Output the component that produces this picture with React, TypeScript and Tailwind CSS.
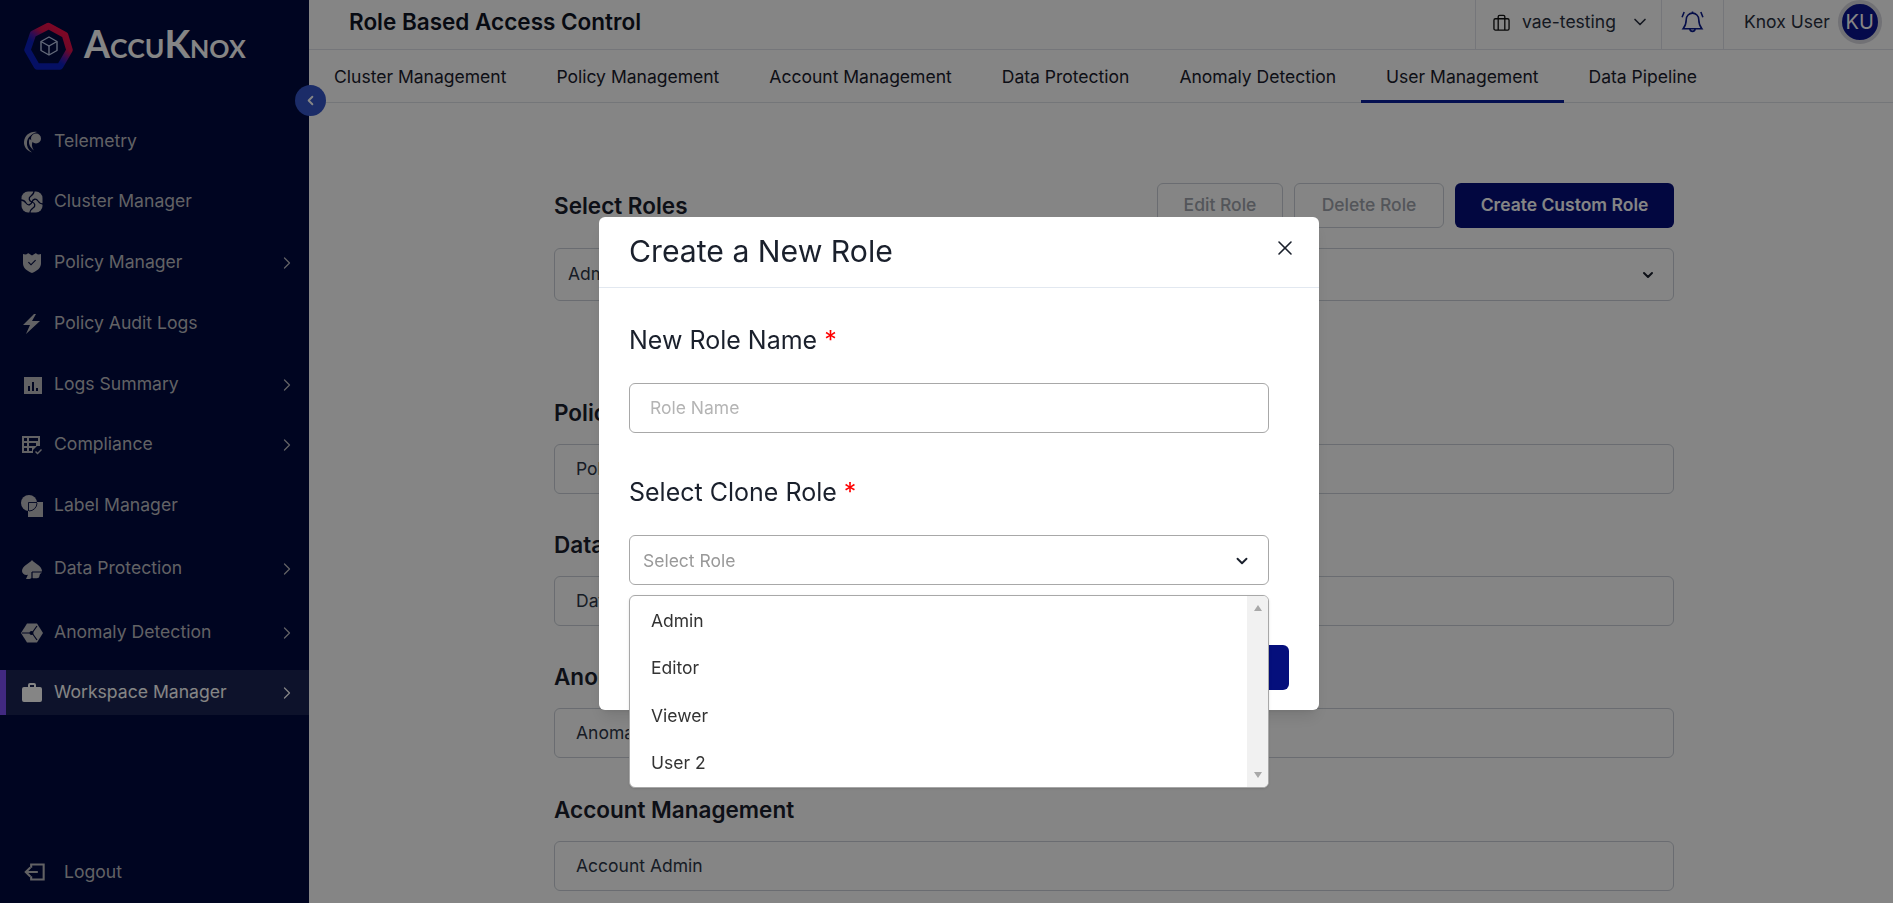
import { ChevronDown, ChevronLeft, ChevronRight, X } from 'lucide-react';
import type { ReactNode } from 'react';

const inter = { fontFamily: 'Inter, "Noto Sans", sans-serif' };
const SIDEBAR_BG = '#000a40';

function Icon({ children }: { children: ReactNode }) {
    return (
        <svg viewBox="0 0 24 24" className="h-[24px] w-[24px] shrink-0" fill="currentColor">
            {children}
        </svg>
    );
}

const NAV = [
    {
        label: 'Telemetry',
        spacing: 'mt-0',
        icon: (
            <Icon>
                <circle cx="16" cy="8.500" r="5" />
                <path d="M17 2C10 1 4.500 5.500 4 12c-.3 4.500 3 9 8 10.500-4-3-5.500-6.500-5-10.500.5-4 4-8 10-10z" />
                <path d="M9.500 9c-1.500 4 0 8 4.500 11.500-2.500-3.500-2.500-7-1-9.500z" />
            </Icon>
        ),
    },
    {
        label: 'Cluster Manager',
        spacing: 'mt-[15px]',
        icon: (
            <Icon>
                <rect x="1.500" y="1.500" width="21" height="21" rx="6.500" />
                <g fill="none" stroke={SIDEBAR_BG} strokeWidth="1.300">
                    <path d="M12 12c-3-1-4-4-1-6 1.500-1 3-2 3-5" />
                    <path d="M12 12c1-3 4-4 6-1 1 1.500 2 3 5 3" />
                    <path d="M12 12c3 1 4 4 1 6-1.500 1-3 2-3 5" />
                    <path d="M12 12c-1 3-4 4-6 1-1-1.500-2-3-5-3" />
                </g>
            </Icon>
        ),
    },
    {
        label: 'Policy Manager',
        spacing: 'mt-[16px]',
        arrow: true,
        icon: (
            <Icon>
                <path
                    fillRule="evenodd"
                    d="M3 3c2 .6 3.500.6 5-.8h.4L12 4.500l3.600-2.300h.4c1.500 1.400 3 1.400 5 .8v9.500c0 4.500-4 7.500-9 9.500-5-2-9-5-9-9.500V3zm5 8.500 3 3 5-5-.8-.8-4.200 4.200-2.200-2.200-.8.800z"
                />
            </Icon>
        ),
    },
    {
        label: 'Policy Audit Logs',
        spacing: 'mt-[16px]',
        icon: (
            <Icon>
                <path d="M14 2 3 13h7l-4 9 14-13h-8l4-7h-2z" />
            </Icon>
        ),
    },
    {
        label: 'Logs Summary',
        spacing: 'mt-[16px]',
        arrow: true,
        icon: (
            <Icon>
                <path
                    fillRule="evenodd"
                    d="M4 4h18v17H4V4zm4 9v5h2v-5H8zm4-4v9h2V9h-2zm4 6v3h2v-3h-2z"
                />
            </Icon>
        ),
    },
    {
        label: 'Compliance',
        spacing: 'mt-[15px]',
        arrow: true,
        icon: (
            <Icon>
                <path
                    fillRule="evenodd"
                    d="M2 3h18v10h-3l-4 4v3H2V3zm2 2v3h3V5H4zm5 0v3h9V5H9zm-5 5v3h3v-3H4zm5 0v3h7v-3H9zm-5 5v3h3v-3H4zm5 0v3h3v-3H9z"
                />
                <path d="m15 19 1-1 1.500 1.500L21 16l1 1-4.500 4.500L15 19z" />
            </Icon>
        ),
    },
    {
        label: 'Label Manager',
        spacing: 'mt-[16px]',
        icon: (
            <Icon>
                <circle cx="9" cy="9" r="8" />
                <rect x="8" y="8" width="15" height="15" />
                <path d="M8.500 17V8.500H17M9 17a8 8 0 0 0 8-8" fill="none" stroke={SIDEBAR_BG} strokeWidth="0.900" />
            </Icon>
        ),
    },
    {
        label: 'Data Protection',
        spacing: 'mt-[18px]',
        textOffset: 'ml-[3px]',
        arrow: true,
        icon: (
            <Icon>
                <path d="M12 3c2 3 10 6 10 11 0 1.500-1 2.500-2 3l-1 3.500c-2 1-5 1-7 .5l-2.500 1H6l2-4.500c-.7.400-1 .5-1.500.5C4 18 2 16 2 14c0-5 8-8 10-11z" />
                <path d="M12 15v7M12 15h10" fill="none" stroke={SIDEBAR_BG} strokeWidth="1.200" />
            </Icon>
        ),
    },
    {
        label: 'Anomaly Detection',
        spacing: 'mt-[19px]',
        arrow: true,
        icon: (
            <Icon>
                <path d="M7 2.500h10l6 9.500-6 9.500H7L1 12z" />
                <path d="M2 12h8M12 12l5-7M12 12l5 7" fill="none" stroke={SIDEBAR_BG} strokeWidth="1.200" />
                <circle cx="11.500" cy="12" r="2" fill={SIDEBAR_BG} />
            </Icon>
        ),
    },
    {
        label: 'Workspace Manager',
        spacing: 'mt-[15px]',
        active: true,
        arrow: true,
        icon: (
            <Icon>
                <path
                    fillRule="evenodd"
                    d="M8 6V4a2 2 0 0 1 2-2h4a2 2 0 0 1 2 2v2h4a2 2 0 0 1 2 2v11a2 2 0 0 1-2 2H4a2 2 0 0 1-2-2V8a2 2 0 0 1 2-2h4zm2 0h4V4h-4v2z"
                />
            </Icon>
        ),
    },
];

const TABS = [
    'Cluster Management',
    'Policy Management',
    'Account Management',
    'Data Protection',
    'Anomaly Detection',
    'User Management',
    'Data Pipeline',
];

function Logo() {
    return (
        <div className="ml-[24px] flex items-center pt-[21px]">
            <svg viewBox="0 0 50 50" className="h-[50px] w-[50px] shrink-0" fill="none">
                <defs>
                    <linearGradient id="ring" x1="0.8" y1="0.1" x2="0.3" y2="0.75">
                        <stop offset="0" stopColor="#f00f48" />
                        <stop offset="0.35" stopColor="#d8104c" />
                        <stop offset="0.6" stopColor="#5a18a0" />
                        <stop offset="0.8" stopColor="#0a1fc0" />
                        <stop offset="1" stopColor="#0a1fc0" />
                    </linearGradient>
                </defs>
                <polygon
                    points="24.500,5 41,14 45.500,29 36,45.500 13,45.500 3.500,29 9,13"
                    stroke="url(#ring)"
                    strokeWidth="6.500"
                    strokeLinejoin="round"
                />
                <g stroke="#c0cceb" strokeWidth="1.400" strokeLinejoin="round">
                    <polygon points="25,16 33,20.500 33,29.500 25,34 17,29.500 17,20.500" />
                    <polyline points="17,20.500 25,25 33,20.500" />
                    <line x1="25" y1="25" x2="25" y2="34" />
                </g>
            </svg>
            <div
                className="mb-[4px] ml-[10px] whitespace-nowrap font-bold leading-none text-white"
                style={{ fontFamily: 'Lato, sans-serif' }}
            >
                <span className="text-[37.5px]">A</span>
                <span className="text-[26.5px]">CCU</span>
                <span className="text-[37.5px]">K</span>
                <span className="text-[25px]">NOX</span>
            </div>
        </div>
    );
}

function Sidebar() {
    return (
        <aside className="relative flex h-full w-[309px] shrink-0 flex-col bg-[#000a40] text-[#bcbcc0]">
            <Logo />
            <div className="absolute right-[-17px] top-[85px] flex h-[31px] w-[31px] items-center justify-center rounded-full bg-[#3455c8] text-white">
                <ChevronLeft className="h-[15px] w-[15px]" strokeWidth={3} />
            </div>
            <nav className="mt-[48px] flex flex-col">
                {NAV.map((item) => (
                    <div
                        key={item.label}
                        className={`flex h-[45px] items-center pl-[20px] pr-[12px] text-[17.6px] ${item.spacing} ${
                            item.active ? 'border-l-[6px] !pl-[14px] border-[#7e50f5] bg-white/10 text-white' : ''
                        }`}
                    >
                        {item.icon}
                        <span className={`ml-[10px] ${item.textOffset ?? ''}`}>{item.label}</span>
                        {item.arrow && <ChevronRight className="ml-auto h-[20px] w-[20px]" strokeWidth={1.5} />}
                    </div>
                ))}
            </nav>
            <div className="mt-auto mb-[18px] flex h-[26px] items-center pl-[22px] text-[17.6px]">
                <svg
                    viewBox="0 0 26 24"
                    className="h-[20px] w-[25px]"
                    fill="none"
                    stroke="currentColor"
                    strokeWidth="2.500"
                >
                    <path d="M9 7V3h15v18H9v-4" />
                    <path d="M17 12H3M8 6.500 2.500 12 8 17.500" />
                </svg>
                <span className="ml-[17px]">Logout</span>
            </div>
        </aside>
    );
}

function Header() {
    return (
        <header className="flex h-[50px] items-center border-b border-[#e0e3ea]">
            <h1 className="mb-[5px] ml-[40px] text-[22.5px] font-semibold text-[#0f1423]">Role Based Access Control</h1>
            <div className="ml-auto flex h-full items-center text-[17.5px] text-[#2a3040]">
                <div className="flex h-full w-[186px] items-center border-l border-[#e0e3ea] pb-[5px] pl-[17px]">
                    <svg
                        viewBox="0 0 18 18"
                        className="h-[17px] w-[17px]"
                        fill="none"
                        stroke="#111"
                        strokeWidth="1.400"
                    >
                        <rect x="1" y="5" width="16" height="12" rx="1.500" />
                        <path d="M5.500 17V3a1.500 1.500 0 0 1 1.500-1.500h4A1.500 1.500 0 0 1 12.500 3v14" />
                    </svg>
                    <span className="ml-[12px]">vae-testing</span>
                    <ChevronDown className="ml-auto mr-[11px] h-[20px] w-[20px]" strokeWidth={2} />
                </div>
                <div className="flex h-full w-[62px] items-center justify-center border-l border-[#e0e3ea] pb-[5px]">
                    <svg
                        viewBox="0 0 24 24"
                        className="h-[25px] w-[25px]"
                        fill="none"
                        stroke="#0a1b8c"
                        strokeWidth="1.500"
                    >
                        <path d="M12 3a6 6 0 0 0-6 6c0 5-1.500 7-3 9h18c-1.500-2-3-4-3-9a6 6 0 0 0-6-6z" />
                        <path d="M9.500 18a2.500 2.500 0 0 0 5 0M4 2 2 7M20 2l2 5M12 3V1.500" />
                    </svg>
                </div>
                <div className="flex h-full w-[170px] items-center border-l border-[#e0e3ea] pb-[5px] pl-[20px]">
                    <span>Knox User</span>
                    <div className="ml-[8px] flex h-[44px] w-[44px] items-center justify-center rounded-full border-[4px] border-[#d8d8e0] bg-[#0a1590] text-[20px] text-white">
                        KU
                    </div>
                </div>
            </div>
        </header>
    );
}

function Tabs() {
    return (
        <div className="flex h-[53px] border-b border-[#dfe2e8] text-[17.52px] text-[#1a202c]">
            {TABS.map((tab) => (
                <div
                    key={tab}
                    className={`flex h-[53px] items-center border-b-[3px] px-[25px] pt-[5px] ${
                        tab === 'User Management' ? 'border-[#0a1f9c]' : 'border-transparent'
                    }`}
                >
                    {tab}
                </div>
            ))}
        </div>
    );
}

function Field({ title, value, heading }: { title: string; value: string; heading: string }) {
    return (
        <div className={heading}>
            <h2 className="text-[22.5px] font-semibold leading-[28px] text-[#1a202c]">{title}</h2>
            <div className="mt-[17px] flex h-[50px] items-center rounded-md border border-[#cbd0d8] pl-[21px] text-[17.5px] text-[#2d3748]">
                {value}
            </div>
        </div>
    );
}

function Roles() {
    return (
        <main className="ml-[245px] w-[1120px] pt-[80px]">
            <div className="flex items-center">
                <h2 className="text-[22.5px] font-semibold text-[#1a202c]">Select Roles</h2>
                <div className="ml-auto flex gap-[11px] text-[17.5px] font-medium">
                    <button className="h-[45px] w-[126px] rounded-md border border-[#cbd0d8] text-[#a0a4ac]">Edit Role</button>
                    <button className="h-[45px] w-[150px] rounded-md border border-[#cbd0d8] text-[#a0a4ac]">Delete Role</button>
                    <button className="h-[45px] w-[219px] rounded-md bg-[#050f7c] font-semibold text-white">Create Custom Role</button>
                </div>
            </div>
            <div className="mt-[20px] flex h-[53px] items-center rounded-md border border-[#cbd0d8] px-[13px] text-[17.5px] text-[#2d3748]">
                Admin
                <ChevronDown className="ml-auto mr-[4px] h-[16px] w-[16px] text-[#1a202c]" strokeWidth={3} />
            </div>
            <Field heading="mt-[98px]" title="Policy Management" value="Policy Admin" />
            <Field heading="mt-[37px]" title="Data Protection" value="Data Protection Admin" />
            <Field heading="mt-[37px]" title="Anomaly Detection" value="Anomaly Admin" />
            <Field heading="mt-[38px]" title="Account Management" value="Account Admin" />
        </main>
    );
}

function Modal() {
    return (
        <div className="fixed inset-0 bg-black/48">
            <section className="relative ml-[599px] mt-[217px] h-[493px] w-[720px] rounded-md bg-white text-[#1a202c] shadow-lg">
                <div className="flex h-[71px] items-center justify-between border-b border-[#e2e8f0] pl-[30px] pr-[22px]">
                    <h2 className="text-[30.2px] font-normal">Create a New Role</h2>
                    <X className="mb-[8px] h-[24px] w-[24px]" strokeWidth={1.6} />
                </div>
                <div className="px-[30px]">
                    <label className="mt-[37px] block text-[25px] leading-[30px]">
                        New Role Name <span className="text-[#f00]">*</span>
                    </label>
                    <div className="mt-[28px] flex h-[50px] w-[640px] items-center rounded-md border border-[#a8a8a8] pl-[20px] text-[17.5px] text-[#b4b4b4]">
                        Role Name
                    </div>
                    <label className="mt-[44px] block text-[25px] leading-[30px]">
                        Select Clone Role <span className="text-[#f00]">*</span>
                    </label>
                    <div className="mt-[28px] flex h-[50px] w-[640px] items-center rounded-md border border-[#a8a8a8] pl-[13px] pr-[17px] pt-[2px] text-[17.5px] text-[#999]">
                        Select Role
                        <ChevronDown className="ml-auto h-[18px] w-[18px] text-[#1a202c]" strokeWidth={2.5} />
                    </div>
                    <div className="mt-[60px] flex justify-end">
                        <div className="h-[45px] w-[120px] rounded-md bg-[#050f7c]" />
                    </div>
                </div>
                <div className="absolute left-[30px] top-[378px] flex h-[193px] w-[640px] overflow-hidden rounded-md border border-[#a8a8a8] bg-white text-[17.5px] text-[#333] shadow-sm">
                    <ul className="flex-1 pl-[21px] pt-[1px]">
                        {['Admin', 'Editor', 'Viewer', 'User 2'].map((role) => (
                            <li key={role} className="flex h-[47.5px] items-center">
                                {role}
                            </li>
                        ))}
                    </ul>
                    <div className="flex w-[21px] flex-col items-center justify-between bg-[#f1f1f1] py-[9px]">
                        <div className="h-0 w-0 border-x-[4.5px] border-b-[6px] border-x-transparent border-b-[#a8a8a8]" />
                        <div className="h-0 w-0 border-x-[4.5px] border-t-[6px] border-x-transparent border-t-[#a8a8a8]" />
                    </div>
                </div>
            </section>
        </div>
    );
}

export default function App() {
    return (
        <div className="flex h-screen overflow-hidden bg-white" style={inter}>
            <Sidebar />
            <div className="min-w-0 flex-1">
                <Header />
                <Tabs />
                <Roles />
            </div>
            <Modal />
        </div>
    );
}
